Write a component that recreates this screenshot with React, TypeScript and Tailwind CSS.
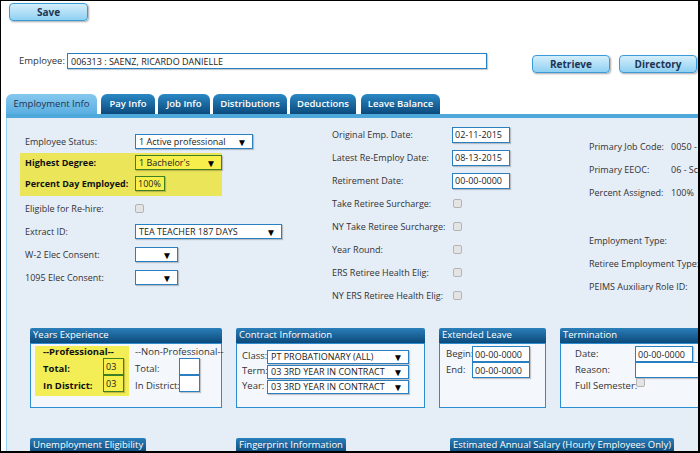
import clsx from 'clsx'

// small building blocks used across the panel
function Arrow() {
  return <span className="text-[10px] leading-none text-black">▼</span>
}

function Sel({ text, className, hl }: { text: string; className: string; hl?: boolean }) {
  return (
    <div
      className={clsx(
        'flex items-center justify-between border pl-[3px] pr-[5px] text-[9px] leading-none text-[#222] whitespace-nowrap shadow-[1px_1px_1px_rgba(0,0,0,0.2)]',
        hl ? 'bg-[#f7f04c] border-[#3f7f23]' : 'bg-white border-[#2a7fc1]',
        className
      )}
    >
      <span>{text}</span>
      <Arrow />
    </div>
  )
}

function Field({ text, className, hl }: { text?: string; className: string; hl?: boolean }) {
  return (
    <div
      className={clsx(
        'flex items-center border pl-[2px] text-[9px] leading-none text-[#222] whitespace-nowrap shadow-[1px_1px_1px_rgba(0,0,0,0.2)]',
        hl ? 'bg-[#f7f04c] border-[#3f7f23]' : 'bg-white border-[#2a7fc1]',
        className
      )}
    >
      {text}
    </div>
  )
}

function Check() {
  return <div className="w-[9px] h-[9px] rounded-[2px] border border-[#b4b4b4] bg-[#e4e4e4]" />
}

function Btn({ label, className }: { label: string; className: string }) {
  return (
    <div
      className={clsx(
        'flex items-center justify-center rounded-[4px] border border-[#3a9bd8] bg-gradient-to-b from-[#d4eefb] to-[#8fd0f2] text-[10px] font-bold text-[#1c3553] shadow-[1px_1px_2px_rgba(0,0,0,0.35)]',
        className
      )}
    >
      {label}
    </div>
  )
}

function Row({ label, children, bold, lw }: { label: string; children?: React.ReactNode; bold?: boolean; lw: string }) {
  return (
    <div className="flex items-center h-[23px] whitespace-nowrap">
      <div className={clsx('shrink-0', lw, bold ? 'font-bold text-[#111]' : 'text-[#333]')}>{label}</div>
      {children}
    </div>
  )
}

function BoxHead({ title }: { title: string }) {
  return (
    <div className="inline-flex items-center h-[15px] px-[3px] rounded-t-[2px] bg-gradient-to-b from-[#2a7fbb] to-[#0c4a7a] text-[9.5px] text-white whitespace-nowrap">
      {title}
    </div>
  )
}

const tabs = [
  { name: 'Pay Info', w: 'w-[54px]', ml: 'ml-[4px]' },
  { name: 'Job Info', w: 'w-[52px]', ml: 'ml-[3px]' },
  { name: 'Distributions', w: 'w-[74px]', ml: 'ml-[3px]' },
  { name: 'Deductions', w: 'w-[66px]', ml: 'ml-[3px]' },
  { name: 'Leave Balance', w: 'w-[79px]', ml: 'ml-[5px]' },
]

export default function App() {
  return (
    <div className="w-[700px] h-[453px] overflow-hidden bg-white border-t border-l border-r-2 border-b-2 border-black font-['Open_Sans',sans-serif] text-[9px]">
      <div className="w-[760px]">
        {/* top buttons + employee lookup */}
        <Btn label="Save" className="mt-[2px] ml-[8px] w-[79px] h-[18px]" />

        <div className="flex items-start mt-[32px] ml-[18px] h-[20px]">
          <div className="h-[16px] flex items-center text-[9.5px] text-[#333] w-[48px]">Employee:</div>
          <Field text="006313 : SAENZ, RICARDO DANIELLE" className="w-[420px] h-[16px] pl-[3px] text-[9.5px]" />
          <Btn label="Retrieve" className="ml-[45px] mt-[2px] w-[78px] h-[18px]" />
          <Btn label="Directory" className="ml-[9px] mt-[2px] w-[78px] h-[18px]" />
        </div>

        {/* tab bar */}
        <div className="flex items-end mt-[21px] ml-[5px] h-[20px]">
          <div className="w-[91px] h-[20px] flex items-center justify-center pt-[1px] rounded-t-[6px] bg-gradient-to-b from-[#86c8ee] to-[#5aafe1] text-[9.5px] text-[#1e3350]">
            Employment Info
          </div>
          {tabs.map((t) => (
            <div
              key={t.name}
              className={clsx(
                'h-[20px] flex items-center justify-center pt-[1px] rounded-t-[6px] bg-gradient-to-b from-[#2b89c6] to-[#0b4a7c] text-[9.5px] font-semibold text-white',
                t.w,
                t.ml
              )}
            >
              {t.name}
            </div>
          ))}
        </div>
        <div className="ml-[5px] h-[4px] bg-[#4ea8da]" />

        {/* panel body */}
        <div className="ml-[5px] h-[340px] border-l border-[#98d4f2] bg-[#e5edf7]">
          <div className="flex h-[210px]">
            {/* left column */}
            <div className="w-[325px] pl-[18px] pt-[12px]">
              <Row label="Employee Status:" lw="w-[110px]">
                <Sel text="1 Active professional" className="w-[118px] h-[15px]" />
              </Row>
              <div className="-ml-[5px] pl-[5px] w-[202px] h-[43px] bg-[#ebe55a] flex flex-col whitespace-nowrap">
                <div className="flex items-center h-[19px]">
                  <div className="w-[110px] font-bold text-[#111]">Highest Degree:</div>
                  <Sel text="1 Bachelor's" className="w-[87px] h-[15px]" hl />
                </div>
                <div className="flex items-center h-[23px]">
                  <div className="w-[110px] font-bold text-[#111]">Percent Day Employed:</div>
                  <Field text="100%" className="w-[30px] h-[15px]" hl />
                </div>
              </div>
              <div className="h-[1px]" />
              <Row label="Eligible for Re-hire:" lw="w-[110px]">
                <Check />
              </Row>
              <Row label="Extract ID:" lw="w-[110px]">
                <Sel text="TEA TEACHER 187 DAYS" className="w-[147px] h-[15px]" />
              </Row>
              <Row label="W-2 Elec Consent:" lw="w-[110px]">
                <Sel text="" className="w-[43px] h-[15px]" />
              </Row>
              <Row label="1095 Elec Consent:" lw="w-[110px]">
                <Sel text="" className="w-[43px] h-[15px]" />
              </Row>
            </div>

            {/* middle column */}
            <div className="w-[257px] pt-[5px]">
              <Row label="Original Emp. Date:" lw="w-[120px]">
                <Field text="02-11-2015" className="w-[58px] h-[16px]" />
              </Row>
              <Row label="Latest Re-Employ Date:" lw="w-[120px]">
                <Field text="08-13-2015" className="w-[58px] h-[16px]" />
              </Row>
              <Row label="Retirement Date:" lw="w-[120px]">
                <Field text="00-00-0000" className="w-[58px] h-[16px]" />
              </Row>
              <Row label="Take Retiree Surcharge:" lw="w-[121px]">
                <Check />
              </Row>
              <Row label="NY Take Retiree Surcharge:" lw="w-[121px]">
                <Check />
              </Row>
              <Row label="Year Round:" lw="w-[121px]">
                <Check />
              </Row>
              <Row label="ERS Retiree Health Elig:" lw="w-[121px]">
                <Check />
              </Row>
              <Row label="NY ERS Retiree Health Elig:" lw="w-[121px]">
                <Check />
              </Row>
            </div>

            {/* right column */}
            <div className="pt-[17px] whitespace-nowrap">
              <Row label="Primary Job Code:" lw="w-[82px]">
                <span className="text-[#333]">0050 -</span>
              </Row>
              <Row label="Primary EEOC:" lw="w-[82px]">
                <span className="text-[#333]">06 - Sc</span>
              </Row>
              <Row label="Percent Assigned:" lw="w-[82px]">
                <span className="text-[#333]">100%</span>
              </Row>
              <div className="h-[25px]" />
              <Row label="Employment Type:" lw="w-[82px]" />
              <Row label="Retiree Employment Type:" lw="w-[120px]" />
              <Row label="PEIMS Auxiliary Role ID:" lw="w-[120px]" />
            </div>
          </div>

          {/* info boxes */}
          <div className="flex items-start ml-[23px] gap-[14px] whitespace-nowrap">
            <div className="flex flex-col">
              <BoxHead title="Years Experience" />
              <div className="w-[192px] h-[65px] border border-[#2b8ccf] bg-[#f4f7fc] flex items-start pt-[2px] pl-[4px]">
                <div className="w-[94px] h-[50px] shrink-0 bg-[#f3ee55] pl-[8px] pt-[1px] text-[9.5px] text-[#111] font-bold leading-none">
                  <div className="h-[10px] flex items-center">--Professional--</div>
                  <div className="flex items-start mt-[1px]">
                    <div className="w-[60px] pt-[2px]">
                      <div className="h-[17px] flex items-center">Total:</div>
                      <div className="h-[17px] flex items-center">In District:</div>
                    </div>
                    <div className="flex flex-col">
                      <Field text="03" className="w-[21px] h-[17px] font-normal" hl />
                      <Field text="03" className="w-[21px] h-[17px] font-normal" hl />
                    </div>
                  </div>
                </div>
                <div className="pl-[6px] pt-[1px] text-[9.5px] text-[#333] leading-none">
                  <div className="h-[10px] flex items-center">--Non-Professional--</div>
                  <div className="flex items-start mt-[1px]">
                    <div className="w-[44px] pt-[2px]">
                      <div className="h-[17px] flex items-center">Total:</div>
                      <div className="h-[17px] flex items-center">In District:</div>
                    </div>
                    <div className="flex flex-col">
                      <Field className="w-[21px] h-[17px]" />
                      <Field className="w-[21px] h-[17px]" />
                    </div>
                  </div>
                </div>
              </div>
            </div>

            <div className="flex flex-col">
              <BoxHead title="Contract Information" />
              <div className="w-[189px] h-[65px] border border-[#2b8ccf] bg-[#f4f7fc] pl-[5px] pt-[5px] text-[9.5px] text-[#333]">
                {[
                  ['Class:', 'PT PROBATIONARY (ALL)'],
                  ['Term:', '03 3RD YEAR IN CONTRACT'],
                  ['Year:', '03 3RD YEAR IN CONTRACT'],
                ].map(([l, v]) => (
                  <div key={l} className="flex items-center h-[15px]">
                    <div className="w-[25px]">{l}</div>
                    <Sel text={v} className="w-[142px] h-[14px]" />
                  </div>
                ))}
              </div>
            </div>

            <div className="flex flex-col">
              <BoxHead title="Extended Leave" />
              <div className="w-[107px] h-[65px] border border-[#2b8ccf] bg-[#f4f7fc] pl-[6px] pt-[2px] text-[9.5px] text-[#333]">
                <div className="flex items-start h-[16px]">
                  <div className="w-[26px] pt-[1px]">Begin:</div>
                  <Field text="00-00-0000" className="w-[58px] h-[16px]" />
                </div>
                <div className="flex items-start h-[16px]">
                  <div className="w-[26px] pt-[1px]">End:</div>
                  <Field text="00-00-0000" className="w-[58px] h-[16px]" />
                </div>
              </div>
            </div>

            <div className="flex flex-col">
              <BoxHead title="Termination" />
              <div className="w-[160px] h-[65px] border border-[#2b8ccf] bg-[#f4f7fc] pl-[14px] pt-[2px] text-[9.5px] text-[#333]">
                <div className="flex items-start h-[16px]">
                  <div className="w-[60px] pt-[1px]">Date:</div>
                  <Field text="00-00-0000" className="w-[58px] h-[16px]" />
                </div>
                <div className="flex items-start h-[16px]">
                  <div className="w-[60px] pt-[1px]">Reason:</div>
                  <Field className="w-[80px] h-[16px]" />
                </div>
                <div className="flex items-start">
                  <div className="w-[61px] pt-[1px]">Full Semester:</div>
                  <Check />
                </div>
              </div>
            </div>
          </div>

          <div className="flex items-start ml-[23px] mt-[30px]">
            <div className="w-[206px]">
              <BoxHead title="Unemployment Eligibility" />
            </div>
            <div className="w-[214px]">
              <BoxHead title="Fingerprint Information" />
            </div>
            <BoxHead title="Estimated Annual Salary (Hourly Employees Only)" />
          </div>
        </div>
      </div>
    </div>
  )
}
